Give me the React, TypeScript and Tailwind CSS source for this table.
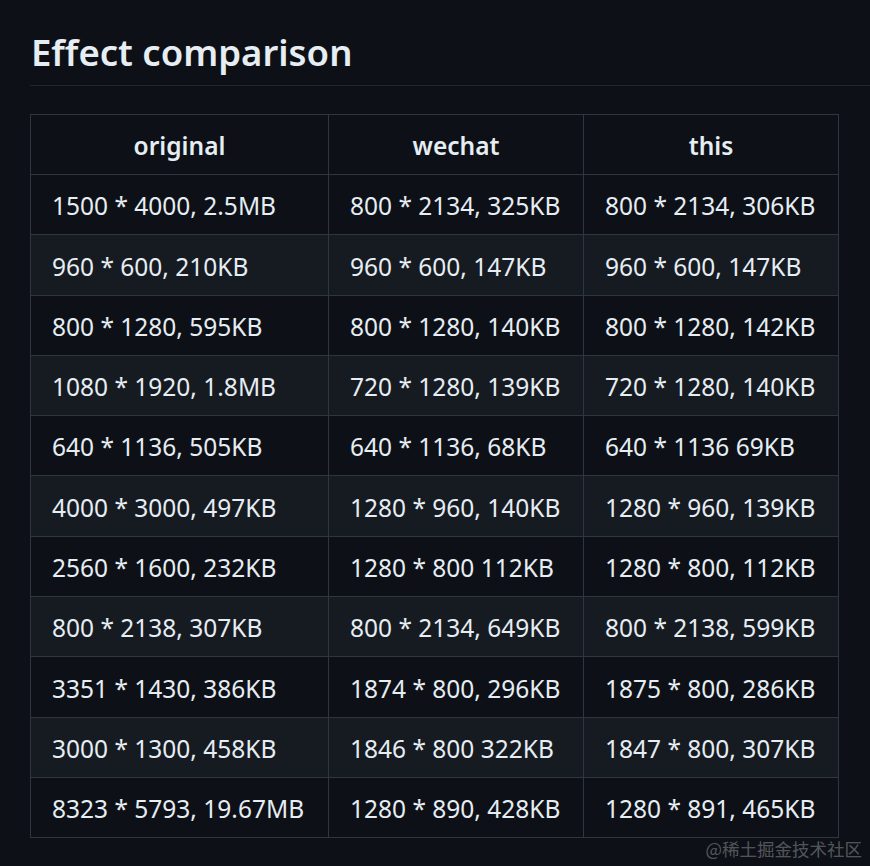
const rows: [string, string, string][] = [
  ["1500 * 4000, 2.5MB", "800 * 2134, 325KB", "800 * 2134, 306KB"],
  ["960 * 600, 210KB", "960 * 600, 147KB", "960 * 600, 147KB"],
  ["800 * 1280, 595KB", "800 * 1280, 140KB", "800 * 1280, 142KB"],
  ["1080 * 1920, 1.8MB", "720 * 1280, 139KB", "720 * 1280, 140KB"],
  ["640 * 1136, 505KB", "640 * 1136, 68KB", "640 * 1136 69KB"],
  ["4000 * 3000, 497KB", "1280 * 960, 140KB", "1280 * 960, 139KB"],
  ["2560 * 1600, 232KB", "1280 * 800 112KB", "1280 * 800, 112KB"],
  ["800 * 2138, 307KB", "800 * 2134, 649KB", "800 * 2138, 599KB"],
  ["3351 * 1430, 386KB", "1874 * 800, 296KB", "1875 * 800, 286KB"],
  ["3000 * 1300, 458KB", "1846 * 800 322KB", "1847 * 800, 307KB"],
  ["8323 * 5793, 19.67MB", "1280 * 890, 428KB", "1280 * 891, 465KB"],
];

export default function App() {
  return (
    <div
      className="relative w-[870px] h-[866px] overflow-hidden bg-[#0d1117] text-[#e6edf3]"
      style={{ fontFamily: '"Noto Sans", "Open Sans", sans-serif' }}
    >
      <div className="pl-[30px] pt-[28px]">
        <h2 className="text-[36.5px] leading-[48px] font-semibold pl-[1px] pb-[9px] border-b border-[#21262d]">
          Effect comparison
        </h2>

        <table className="mt-[28px] border-collapse text-[24.5px]">
          <thead>
            <tr className="h-[60px]">
              <th className="w-[298px] border border-[#30363d] pt-[4px] font-semibold text-center">original</th>
              <th className="w-[255px] border border-[#30363d] pt-[4px] font-semibold text-center">wechat</th>
              <th className="w-[255px] border border-[#30363d] pt-[4px] font-semibold text-center">this</th>
            </tr>
          </thead>
          <tbody>
            {rows.map((r, i) => (
              <tr key={i} className={`h-[60.3px] ${i % 2 === 1 ? "bg-[#161b22]" : "bg-[#0d1117]"}`}>
                {r.map((c, j) => (
                  <td key={j} className="border border-[#30363d] px-[21px] pt-[4px] whitespace-nowrap">
                    {c}
                  </td>
                ))}
              </tr>
            ))}
          </tbody>
        </table>
      </div>

      <div
        className="absolute right-[8px] bottom-[6px] text-[17.5px] leading-[22px] text-[#ffffff]/30"
        style={{ fontFamily: '"Noto Sans CJK SC", sans-serif' }}
      >
        @稀土掘金技术社区
      </div>
    </div>
  );
}
